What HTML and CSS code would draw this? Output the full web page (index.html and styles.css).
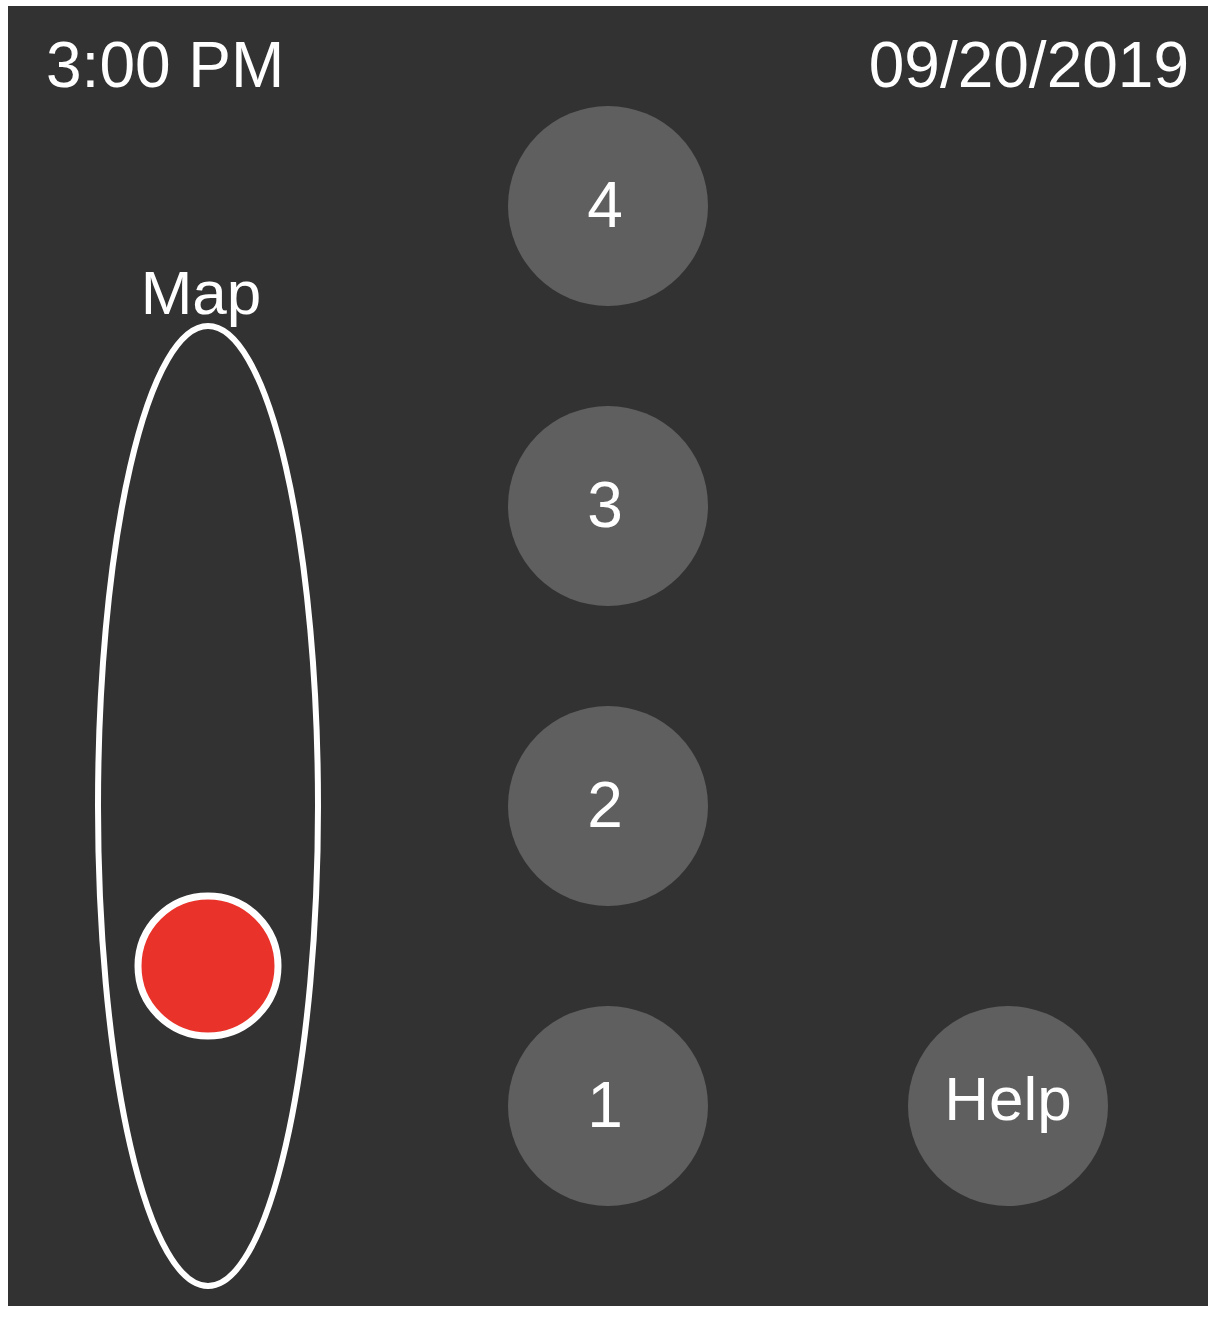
FILE: index.html
```html
<!DOCTYPE html>
<html>
<head>
<meta charset="utf-8">
<link rel="stylesheet" href="styles.css">
</head>
<body>
<div class="panel">
  <div class="header">
    <div class="time">3:00 PM</div>
    <div class="date">09/20/2019</div>
  </div>
  <div class="main">
    <div class="map-col">
      <div class="map-label">Map</div>
      <svg class="map-svg" width="400" height="975" viewBox="0 0 400 975">
        <ellipse cx="200" cy="485" rx="110" ry="480" fill="none" stroke="#ffffff" stroke-width="6"/>
        <circle cx="200" cy="645" r="70" fill="#e9332a" stroke="#ffffff" stroke-width="7"/>
      </svg>
    </div>
    <div class="floors">
      <div class="btn num">4</div>
      <div class="btn num">3</div>
      <div class="btn num">2</div>
      <div class="btn num">1</div>
    </div>
    <div class="help-col">
      <div class="btn help">Help</div>
    </div>
  </div>
</div>
</body>
</html>
```

FILE: styles.css
```css
html, body {
  background: #ffffff;
}
body {
  margin: 6px 8px;
  font-family: "Liberation Sans", Arial, Helvetica, sans-serif;
  color: #ffffff;
}
.panel {
  width: 1200px;
  height: 1300px;
  background: #323232;
  display: flex;
  flex-direction: column;
}
.header {
  height: 100px;
  box-sizing: border-box;
  padding: 22px 19px 0 38px;
  display: flex;
  justify-content: space-between;
  align-items: flex-start;
  font-size: 64px;
  line-height: 74px;
}
.main {
  display: grid;
  grid-template-columns: repeat(3, 400px);
  height: 1200px;
}
.map-col {
  display: flex;
  flex-direction: column;
  align-items: center;
}
.map-label {
  margin-top: 155px;
  margin-bottom: -4px;
  font-size: 62px;
  line-height: 64px;
  height: 64px;
  padding-right: 14px;
}
.map-svg {
  display: block;
  overflow: visible;
}
.floors {
  display: flex;
  flex-direction: column;
  align-items: center;
  gap: 100px;
}
.btn {
  width: 200px;
  height: 200px;
  border-radius: 50%;
  background: #5f5f5f;
  display: flex;
  align-items: center;
  justify-content: center;
  box-sizing: border-box;
  font-size: 64px;
  line-height: 1;
}
.num {
  padding-bottom: 3px;
  padding-right: 6px;
}
.help-col {
  display: flex;
  flex-direction: column;
  align-items: center;
  justify-content: flex-end;
  padding-bottom: 100px;
}
.help {
  font-size: 62px;
  padding-bottom: 14px;
}
```
